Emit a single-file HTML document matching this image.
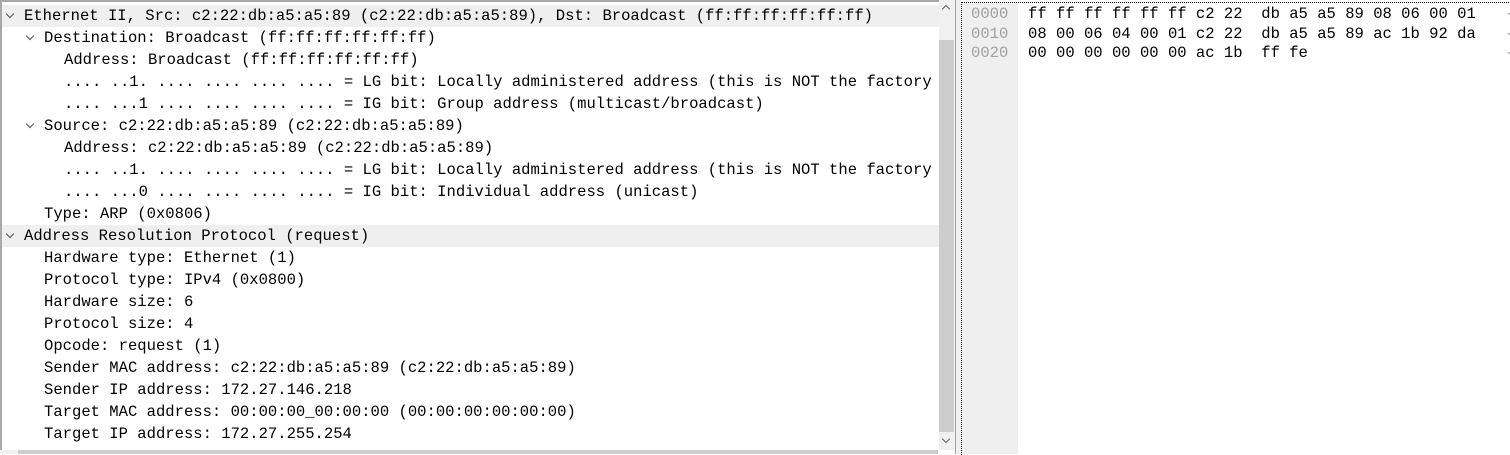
<!DOCTYPE html>
<html><head><style>
body{margin:0;width:1510px;height:454px;overflow:hidden;background:#fff;font-family:"Liberation Mono",monospace;font-size:15.55px;color:#000;position:relative}
.l{position:absolute;left:0;top:0;width:955px;height:454px;border-left:2px solid #a8a8a8;border-top:2px solid #a8a8a8;box-sizing:border-box}
.row{position:absolute;left:0;height:22px;line-height:22px;white-space:pre;width:937px;overflow:hidden}
.row.h{background:#efefef}
.ar{position:absolute;width:5px;height:5px;border-right:1.5px solid #555;border-bottom:1.5px solid #555;transform:rotate(45deg)}
.vs{position:absolute;left:939px;top:0;width:16px;height:450px;background:#f0f0f0}
.hs{position:absolute;left:0;top:450px;width:938px;height:4px;background:#f0f0f0}
</style></head><body>
<div class="l">
<div class="row h" style="top:3px"><span class="ar" style="left:5px;top:6px"></span><span style="position:absolute;left:22px">Ethernet II, Src: c2:22:db:a5:a5:89 (c2:22:db:a5:a5:89), Dst: Broadcast (ff:ff:ff:ff:ff:ff)</span></div>
<div class="row" style="top:25px"><span class="ar" style="left:25px;top:6px"></span><span style="position:absolute;left:42px">Destination: Broadcast (ff:ff:ff:ff:ff:ff)</span></div>
<div class="row" style="top:47px"><span style="position:absolute;left:62px">Address: Broadcast (ff:ff:ff:ff:ff:ff)</span></div>
<div class="row" style="top:69px"><span style="position:absolute;left:62px">.... ..1. .... .... .... .... = LG bit: Locally administered address (this is NOT the factory default)</span></div>
<div class="row" style="top:91px"><span style="position:absolute;left:62px">.... ...1 .... .... .... .... = IG bit: Group address (multicast/broadcast)</span></div>
<div class="row" style="top:113px"><span class="ar" style="left:25px;top:6px"></span><span style="position:absolute;left:42px">Source: c2:22:db:a5:a5:89 (c2:22:db:a5:a5:89)</span></div>
<div class="row" style="top:135px"><span style="position:absolute;left:62px">Address: c2:22:db:a5:a5:89 (c2:22:db:a5:a5:89)</span></div>
<div class="row" style="top:157px"><span style="position:absolute;left:62px">.... ..1. .... .... .... .... = LG bit: Locally administered address (this is NOT the factory default)</span></div>
<div class="row" style="top:179px"><span style="position:absolute;left:62px">.... ...0 .... .... .... .... = IG bit: Individual address (unicast)</span></div>
<div class="row" style="top:201px"><span style="position:absolute;left:42px">Type: ARP (0x0806)</span></div>
<div class="row h" style="top:223px"><span class="ar" style="left:5px;top:6px"></span><span style="position:absolute;left:22px">Address Resolution Protocol (request)</span></div>
<div class="row" style="top:245px"><span style="position:absolute;left:42px">Hardware type: Ethernet (1)</span></div>
<div class="row" style="top:267px"><span style="position:absolute;left:42px">Protocol type: IPv4 (0x0800)</span></div>
<div class="row" style="top:289px"><span style="position:absolute;left:42px">Hardware size: 6</span></div>
<div class="row" style="top:311px"><span style="position:absolute;left:42px">Protocol size: 4</span></div>
<div class="row" style="top:333px"><span style="position:absolute;left:42px">Opcode: request (1)</span></div>
<div class="row" style="top:355px"><span style="position:absolute;left:42px">Sender MAC address: c2:22:db:a5:a5:89 (c2:22:db:a5:a5:89)</span></div>
<div class="row" style="top:377px"><span style="position:absolute;left:42px">Sender IP address: 172.27.146.218</span></div>
<div class="row" style="top:399px"><span style="position:absolute;left:42px">Target MAC address: 00:00:00_00:00:00 (00:00:00:00:00:00)</span></div>
<div class="row" style="top:421px"><span style="position:absolute;left:42px">Target IP address: 172.27.255.254</span></div>
</div>
<div class="vs"><div style="position:absolute;left:0;top:40px;width:15px;height:392px;background:#cdcdcd"></div>
<div class="ar" style="left:4px;top:6px;transform:rotate(225deg);border-color:#606060"></div>
<div class="ar" style="left:4px;top:436px;border-color:#606060"></div></div>
<div class="hs"><div style="position:absolute;left:18px;top:0;width:920px;height:4px;background:#cdcdcd"></div></div>
<div style="position:absolute;left:955px;top:0;width:1px;height:454px;background:#a0a0a0"></div>
<div style="position:absolute;left:956px;top:0;width:5px;height:454px;background:#f0f0f0"></div>
<div style="position:absolute;left:961px;top:2px;width:549px;height:452px;border-left:1px dotted #000;border-top:1px dotted #000"></div>
<div style="position:absolute;left:962px;top:3px;width:56px;height:451px;background:#efefef"></div>
<div style="position:absolute;left:971px;top:5px;line-height:19.7px;white-space:pre;color:#a0a0a0">0000
0010
0020</div>
<div style="position:absolute;left:1028px;top:5px;line-height:19.7px;white-space:pre">ff ff ff ff ff ff c2 22  db a5 a5 89 08 06 00 01
08 00 06 04 00 01 c2 22  db a5 a5 89 ac 1b 92 da
00 00 00 00 00 00 ac 1b  ff fe</div>
<div style="position:absolute;left:1505px;top:5px;line-height:19.7px;white-space:pre;color:#a0a0a0">-
-
-</div>
</body></html>
